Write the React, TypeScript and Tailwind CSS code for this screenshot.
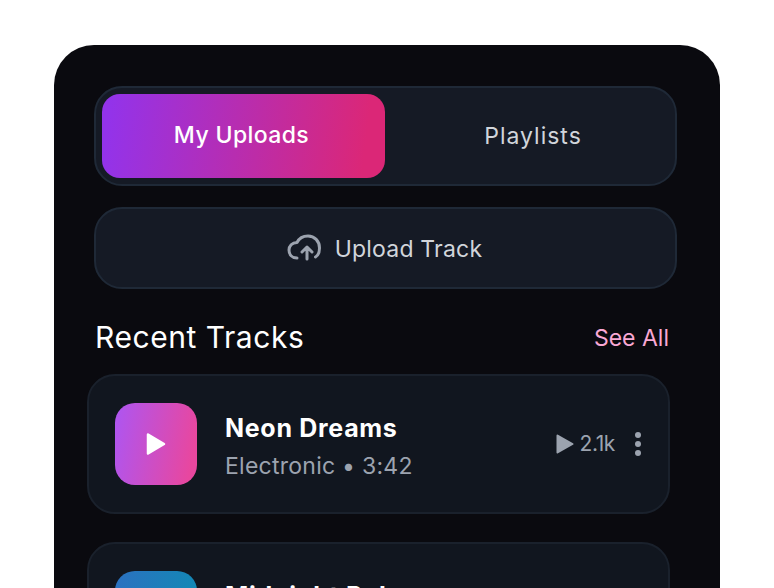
const font = { fontFamily: "Inter, 'Liberation Sans', sans-serif" };

function Track({ title, sub, plays, grad }: { title: string; sub: string; plays: string; grad: string }) {
  return (
    <div className="flex h-[140px] shrink-0 items-center rounded-[28px] border-2 border-[#1a212c] bg-[#11161f] pl-[26px] pr-[27px]">
      <div className={`flex h-[82px] w-[82px] shrink-0 items-center justify-center rounded-[20px] ${grad}`}>
        <svg width="20" height="24" viewBox="0 0 20 24">
          <path d="M2 2.5 L18 12 L2 21.5 Z" fill="#fff" stroke="#fff" strokeWidth="2.5" strokeLinejoin="round" />
        </svg>
      </div>
      <div className="ml-[28px] flex-1 pt-[3px]">
        <div className="text-[25px] leading-[32px] font-bold tracking-[0.7px] text-white">{title}</div>
        <div className="mt-[8px] text-[23px] leading-[28px] tracking-[0.25px] text-[#9ca3af]">{sub}</div>
      </div>
      <div className="flex items-center">
        <svg width="18" height="20" viewBox="0 0 18 20">
          <path d="M1.5 1.5 L16.5 10 L1.5 18.5 Z" fill="#9ca3af" stroke="#9ca3af" strokeWidth="2" strokeLinejoin="round" />
        </svg>
        <span className="ml-[5px] text-[21px] leading-[28px] tracking-[-0.4px] text-[#9ca3af]">{plays}</span>
        <div className="ml-[20px] flex flex-col gap-[3px]">
          <span className="h-[6px] w-[6px] rounded-full bg-[#9ca3af]" />
          <span className="h-[6px] w-[6px] rounded-full bg-[#9ca3af]" />
          <span className="h-[6px] w-[6px] rounded-full bg-[#9ca3af]" />
        </div>
      </div>
    </div>
  );
}

export default function App() {
  return (
    <div className="h-[588px] w-[774px] overflow-hidden bg-white" style={font}>
      <div className="ml-[54px] mt-[45px] h-[600px] w-[666px] rounded-[40px] bg-[#0a0a0f] px-[40px] pt-[41px]">
        <div className="flex h-[100px] w-[583px] rounded-[28px] border-2 border-[#1f2937] bg-[#151a25] p-[6px]">
          <button className="flex h-[84px] w-[283px] items-center justify-center rounded-[18px] bg-[linear-gradient(97deg,#9333ea_3%,#db2777_92%)] pr-[4px] pb-[2px] text-[23px] font-medium tracking-[0.4px] text-white">
            My Uploads
          </button>
          <button className="flex h-[84px] flex-1 items-center justify-center pl-[12px] text-[23px] tracking-[1px] text-[#d1d5db]">Playlists</button>
        </div>
        <button className="mt-[21px] flex h-[82px] w-[583px] items-center justify-center rounded-[28px] border-2 border-[#1f2937] bg-[#151a25] pr-[2px] text-[23px] tracking-[0.2px] text-[#d1d5db]">
          <svg width="34" height="28" viewBox="6 7 34 28" fill="none" stroke="#9ca3af" strokeWidth="3" strokeLinecap="round" strokeLinejoin="round">
            <path d="M16 31 C11 31 8 27.5 8 23 C8 19 11 15.5 16 15.5 C18 11.5 22 9 27 9 C33.5 9 38.5 14 38.5 21 C38.5 25 37 28.5 34.5 30" />
            <path d="M26 32 V20 M21 25 L26 20 L31 25" />
          </svg>
          <span className="ml-[14px] pt-[2px]">Upload Track</span>
        </button>
        <div className="mt-[30px] flex w-[575px] items-center justify-between pl-[1px]">
          <span className="text-[30px] leading-[36px] tracking-[0.55px] text-white">Recent Tracks</span>
          <span className="pt-[2px] text-[23px] leading-[30px] text-[#f9a8d4]">See All</span>
        </div>
        <div className="-ml-[7px] mt-[19px] flex w-[583px] flex-col gap-[28px]">
          <Track title="Neon Dreams" sub="Electronic • 3:42" plays="2.1k" grad="bg-[linear-gradient(100deg,#b055ee_5%,#e8479f_90%)]" />
          <Track title="Midnight Pulse" sub="Synthwave • 4:15" plays="1.8k" grad="bg-[linear-gradient(100deg,#2a72c0_5%,#1289b5_90%)]" />
        </div>
      </div>
    </div>
  );
}
